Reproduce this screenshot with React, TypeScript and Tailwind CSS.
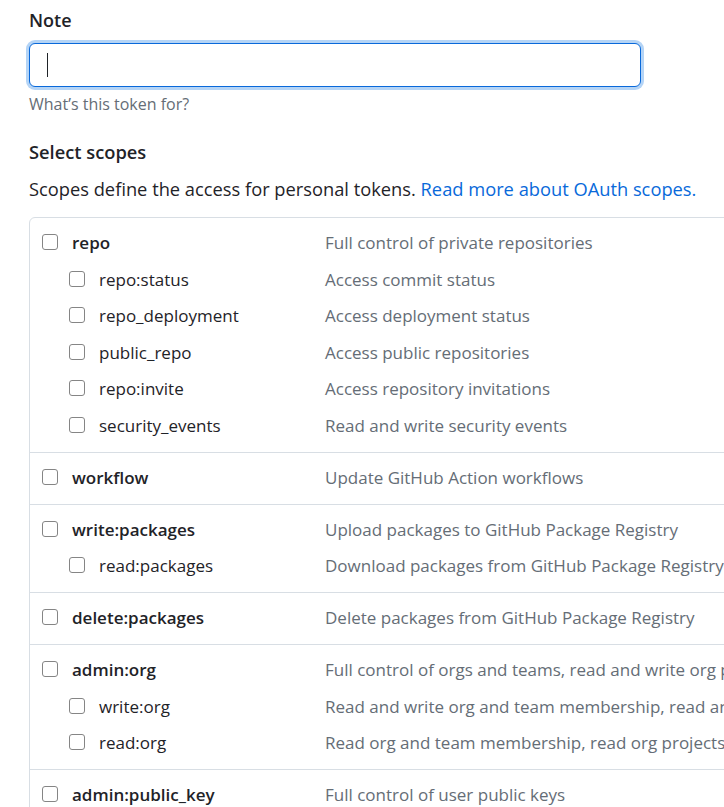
import React from "react";

type Scope = { name: string; desc: string };
type Group = { parent: Scope; children?: Scope[] };

const groups: Group[] = [
    {
        parent: { name: "repo", desc: "Full control of private repositories" },
        children: [
            { name: "repo:status", desc: "Access commit status" },
            { name: "repo_deployment", desc: "Access deployment status" },
            { name: "public_repo", desc: "Access public repositories" },
            { name: "repo:invite", desc: "Access repository invitations" },
            { name: "security_events", desc: "Read and write security events" },
        ],
    },
    { parent: { name: "workflow", desc: "Update GitHub Action workflows" } },
    {
        parent: { name: "write:packages", desc: "Upload packages to GitHub Package Registry" },
        children: [{ name: "read:packages", desc: "Download packages from GitHub Package Registry" }],
    },
    { parent: { name: "delete:packages", desc: "Delete packages from GitHub Package Registry" } },
    {
        parent: { name: "admin:org", desc: "Full control of orgs and teams, read and write org projects" },
        children: [
            { name: "write:org", desc: "Read and write org and team membership, read and write org projects" },
            { name: "read:org", desc: "Read org and team membership, read org projects" },
        ],
    },
    {
        parent: { name: "admin:public_key", desc: "Full control of user public keys" },
        children: [
            { name: "write:public_key", desc: "Write user public keys" },
            { name: "read:public_key", desc: "Read user public keys" },
        ],
    },
];

const Checkbox = () => (
    <span className="w-[16px] h-[16px] mb-[3px] shrink-0 rounded-[3px] border border-[#858585] bg-white" />
);

const ScopeRow = ({ scope, child }: { scope: Scope; child?: boolean }) => (
    <div className="flex items-center h-[36.5px] leading-[36.5px] whitespace-nowrap">
        <div className={`w-[295px] shrink-0 flex items-center gap-[14px] ${child ? "pl-[39px]" : "pl-[12px]"}`}>
            <Checkbox />
            <span className={child ? "text-[#1f2328]" : "text-[#1f2328] font-semibold"}>{scope.name}</span>
        </div>
        <span className="text-[#656d76]">{scope.desc}</span>
    </div>
);

export default function App() {
    return (
        <div className="w-[724px] h-[807px] overflow-hidden bg-white pl-[29px] pt-[8px] font-['Open_Sans',sans-serif] text-[#1f2328] antialiased">
            {/* Note field */}
            <div className="text-[18px] font-semibold leading-[24px]">Note</div>
            <div className="mt-[11px] w-[612px] h-[44px] rounded-[6px] border border-[#0969da] ring-[3px] ring-[#b4d4f6] bg-white flex items-center pl-[17px]">
                <span className="w-px h-[24px] bg-[#1f2328]" />
            </div>
            <div className="mt-[7px] text-[16px] leading-[20px] text-[#656d76]">What’s this token for?</div>

            {/* Scopes */}
            <div className="mt-[26px] text-[18.3px] font-semibold leading-[24px]">Select scopes</div>
            <p className="mt-[12px] text-[18.3px] leading-[26px] whitespace-nowrap">
                Scopes define the access for personal tokens.{" "}
                <a className="text-[#0969da]">Read more about OAuth scopes.</a>
            </p>

            <div className="mt-[15px] w-[780px] rounded-[6px] border border-[#d8dee4] text-[17px]">
                {groups.map((g, i) => (
                    <div key={g.parent.name} className={`py-[7.25px] ${i > 0 ? "border-t border-[#d8dee4]" : ""}`}>
                        <ScopeRow scope={g.parent} />
                        {g.children?.map((c) => (
                            <ScopeRow key={c.name} scope={c} child />
                        ))}
                    </div>
                ))}
            </div>
        </div>
    );
}
